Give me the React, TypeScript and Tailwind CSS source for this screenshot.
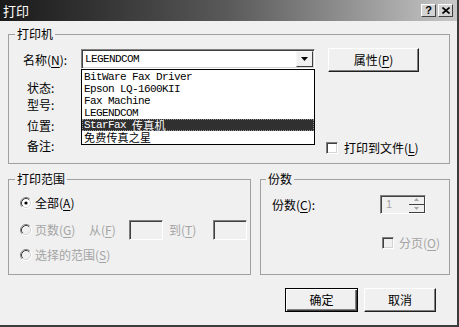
import React from "react";

function Key({ k }: { k: string }) {
  return (
    <>
      (<span className="underline underline-offset-2">{k}</span>)
    </>
  );
}

function Radio({ checked, disabled }: { checked?: boolean; disabled?: boolean }) {
  return (
    <svg width="12" height="12" viewBox="0 0 12 12" className="shrink-0">
      <circle cx="6" cy="6" r="4.5" fill={disabled ? "#f0f0f0" : "#ffffff"} />
      <path d="M9.89 2.11 A5.5 5.5 0 0 0 2.11 9.89" fill="none" stroke="#808080" />
      <path d="M9.18 2.82 A4.5 4.5 0 0 0 2.82 9.18" fill="none" stroke="#404040" />
      <path d="M2.11 9.89 A5.5 5.5 0 0 0 9.89 2.11" fill="none" stroke="#ffffff" />
      <path d="M2.82 9.18 A4.5 4.5 0 0 0 9.18 2.82" fill="none" stroke="#d4d4d4" />
      {checked && <circle cx="6" cy="6" r="1.6" fill="#000000" />}
    </svg>
  );
}

function Checkbox({ disabled }: { disabled?: boolean }) {
  return (
    <span
      className={`block w-[12px] h-[12px] shrink-0 border border-t-[#808080] border-l-[#808080] border-r-white border-b-white shadow-[inset_1px_1px_0_#404040,inset_-1px_-1px_0_#d4d4d4] ${
        disabled ? "bg-[#f0f0f0]" : "bg-white"
      }`}
    />
  );
}

const printers = [
  { name: "BitWare Fax Driver" },
  { name: "Epson LQ-1600KII" },
  { name: "Fax Machine" },
  { name: "LEGENDCOM" },
  { name: "StarFax ", cjk: "传真机", active: true },
  { name: "", cjk: "免费传真之星" },
];

export default function App() {
  return (
    <div className="w-[459px] h-[327px] bg-[#f0f0f0] border-r-2 border-b-2 border-r-[#3c3c3c] border-b-[#3c3c3c] flex flex-col overflow-hidden font-['Noto_Sans_CJK_SC',sans-serif] text-[12px] leading-[14px] text-black">
      {/* title bar */}
      <div className="h-[21px] shrink-0 flex items-center justify-between pl-[3px] pr-[4px] bg-linear-to-r from-[#1a1a1a] via-[#5a5a5a] to-[#c8c8c8]">
        <span className="text-white text-[13px] leading-[15px]">打印</span>
        <div className="flex gap-[2px]">
          <span className="w-[15px] h-[13px] flex items-center justify-center bg-[#d4d4d4] border border-t-white border-l-white border-r-[#404040] border-b-[#404040] text-[11px] leading-none font-bold font-['Liberation_Sans',sans-serif]">
            ?
          </span>
          <span className="w-[15px] h-[13px] flex items-center justify-center bg-[#d4d4d4] border border-t-white border-l-white border-r-[#404040] border-b-[#404040]">
            <svg width="8" height="7" viewBox="0 0 8 7">
              <path d="M0.5 0.5 L7.5 6.5 M7.5 0.5 L0.5 6.5" stroke="#000" strokeWidth="1.6" />
            </svg>
          </span>
        </div>
      </div>

      <div className="flex flex-col pl-[8px]">
        {/* printer group */}
        <fieldset className="mt-[6px] w-[442px] border border-[#a0a0a0]">
          <legend className="ml-[6px] px-[2px]">打印机</legend>
          <div className="flex items-start pt-[7px] pl-[14px]">
            <span className="w-[58px] mt-[5px] whitespace-nowrap">
              名称<Key k="N" />:
            </span>
            <div className="relative mt-[1px]">
              <div className="w-[234px] h-[20px] bg-white flex items-center border border-t-[#808080] border-l-[#808080] border-r-white border-b-white shadow-[inset_1px_1px_0_#404040,inset_-1px_-1px_0_#d4d4d4]">
                <span className="flex-1 pl-[3px] font-['Liberation_Mono',monospace] text-[11px] tracking-[-0.6px]">
                  LEGENDCOM
                </span>
                <span className="w-[17px] h-[16px] mr-[1px] flex items-center justify-center bg-[#f0f0f0] border border-t-[#f8f8f8] border-l-[#f8f8f8] border-r-[#404040] border-b-[#404040]">
                  <svg width="7" height="4" viewBox="0 0 7 4">
                    <path d="M0 0 H7 L3.5 4 Z" fill="#000" />
                  </svg>
                </span>
              </div>
              <div className="absolute left-0 top-full w-[234px] bg-white border border-black py-[1px] z-10">
                {printers.map((p) => (
                  <div
                    key={p.name + (p.cjk ?? "")}
                    className={`h-[12px] flex items-center pl-[2px] whitespace-pre ${
                      p.active ? "bg-[#303030] text-white outline-1 outline-dotted outline-[#909090] -outline-offset-1" : ""
                    }`}
                  >
                    <span className="font-['Liberation_Mono',monospace] text-[11px] leading-[12px] tracking-[-0.6px]">
                      {p.name}
                    </span>
                    {p.cjk && <span className="text-[11px] leading-[12px] tracking-[0.2px]">{p.cjk}</span>}
                  </div>
                ))}
              </div>
            </div>
            <button className="ml-[13px] w-[91px] h-[24px] bg-[#f0f0f0] border border-t-white border-l-white border-r-[#202020] border-b-[#202020] shadow-[inset_-1px_-1px_0_#808080]">
              属性<Key k="P" />
            </button>
          </div>
          <div className="flex">
            <div className="w-[317px] pl-[18px] pt-[9px] pb-[10px] flex flex-col">
              <span>状态:</span>
              <span className="mt-[3px]">型号:</span>
              <span className="mt-[7px]">位置:</span>
              <span className="mt-[6px]">备注:</span>
            </div>
            <div className="self-end mb-[8px] flex items-center gap-[6px]">
              <Checkbox />
              <span>
                打印到文件<Key k="L" />
              </span>
            </div>
          </div>
        </fieldset>

        <div className="flex mt-[8px]">
          {/* range group */}
          <fieldset className="w-[243px] border border-[#a0a0a0]">
            <legend className="ml-[6px] px-[2px]">打印范围</legend>
            <div className="flex flex-col pl-[11px] pt-[10px] pb-[12px]">
              <div className="flex items-center gap-[3px] h-[14px]">
                <Radio checked />
                <span>
                  全部<Key k="A" />
                </span>
              </div>
              <div className="flex items-center h-[20px] mt-[10px] text-[#a4a4a4]">
                <div className="w-[69px] flex items-center gap-[3px]">
                  <Radio disabled />
                  <span>
                    页数<Key k="G" />
                  </span>
                </div>
                <span className="w-[40px]">
                  从<Key k="F" />
                </span>
                <span className="w-[34px] h-[20px] border border-t-[#808080] border-l-[#808080] border-r-white border-b-white shadow-[inset_1px_1px_0_#404040]" />
                <span className="w-[44px] ml-[6px]">
                  到<Key k="T" />
                </span>
                <span className="w-[34px] h-[20px] border border-t-[#808080] border-l-[#808080] border-r-white border-b-white shadow-[inset_1px_1px_0_#404040]" />
              </div>
              <div className="flex items-center gap-[3px] h-[14px] mt-[8px] text-[#a4a4a4]">
                <Radio disabled />
                <span>
                  选择的范围<Key k="S" />
                </span>
              </div>
            </div>
          </fieldset>

          {/* copies group */}
          <fieldset className="ml-[9px] w-[190px] border border-[#a0a0a0]">
            <legend className="ml-[5px] px-[2px]">份数</legend>
            <div className="flex items-center pl-[11px] pt-[9px]">
              <span className="w-[108px]">
                份数<Key k="C" />:
              </span>
              <div className="w-[46px] h-[19px] flex border border-t-[#808080] border-l-[#808080] border-r-white border-b-white shadow-[inset_1px_1px_0_#404040]">
                <span className="flex-1 pl-[5px] text-[11px] leading-[17px] text-[#a4a4a4] font-['Liberation_Sans',sans-serif]">
                  1
                </span>
                <div className="w-[16px] flex flex-col">
                  <span className="flex-1 flex items-center justify-center border-r border-b border-r-[#404040] border-b-[#404040]">
                    <svg width="5" height="3" viewBox="0 0 5 3">
                      <path d="M0 3 H5 L2.5 0 Z" fill="#a4a4a4" />
                    </svg>
                  </span>
                  <span className="flex-1 flex items-center justify-center border-r border-b border-r-[#404040] border-b-[#404040]">
                    <svg width="5" height="3" viewBox="0 0 5 3">
                      <path d="M0 0 H5 L2.5 3 Z" fill="#a4a4a4" />
                    </svg>
                  </span>
                </div>
              </div>
            </div>
            <div className="flex items-center gap-[5px] pl-[121px] mt-[22px] text-[#a4a4a4]">
              <Checkbox disabled />
              <span>
                分页<Key k="O" />
              </span>
            </div>
          </fieldset>
        </div>

        {/* buttons */}
        <div className="flex gap-[6px] ml-[277px] mt-[13px]">
          <button className="w-[73px] h-[24px] bg-[#f0f0f0] border border-black shadow-[inset_1px_1px_0_#fff,inset_-1px_-1px_0_#404040,inset_-2px_-2px_0_#808080]">
            确定
          </button>
          <button className="w-[72px] h-[24px] bg-[#f0f0f0] border border-t-white border-l-white border-r-[#202020] border-b-[#202020] shadow-[inset_-1px_-1px_0_#808080]">
            取消
          </button>
        </div>
      </div>
    </div>
  );
}
